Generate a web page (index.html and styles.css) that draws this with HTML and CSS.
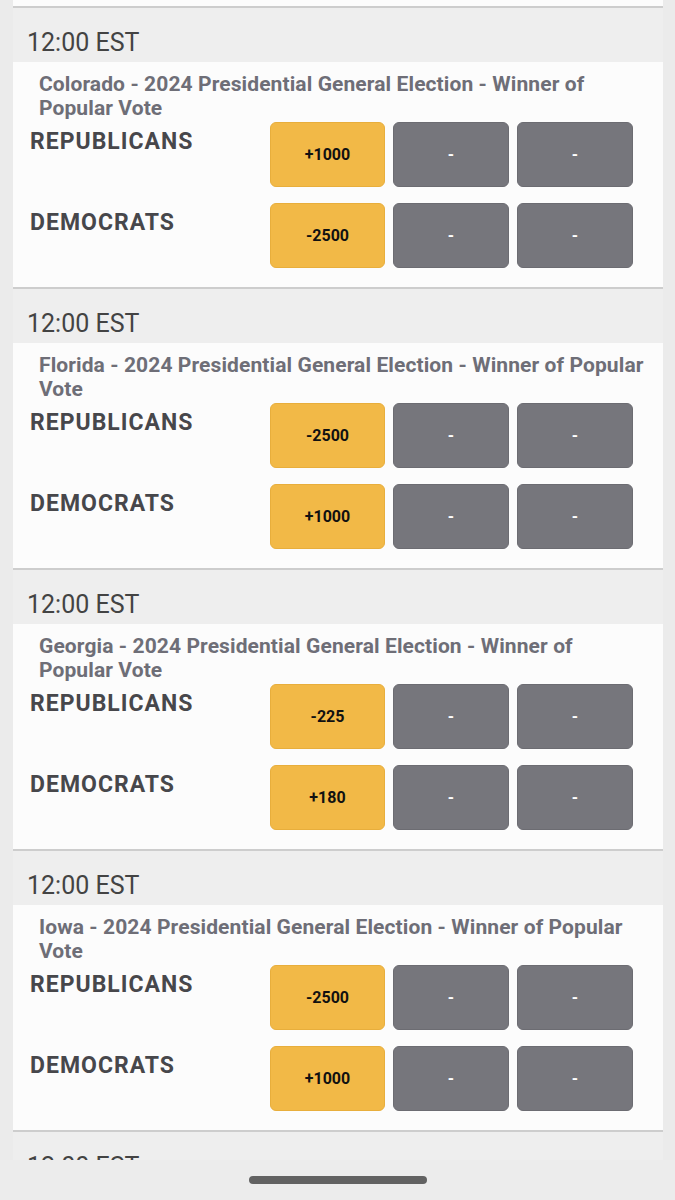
FILE: index.html
```html
<!DOCTYPE html>
<html lang="en">
<head>
    <meta charset="UTF-8">
    <meta name="viewport" content="width=device-width, initial-scale=1.0">
    <title>Election Odds</title>
    <link rel="stylesheet" href="styles.css">
</head>
<body>
<div class="screen">
    <div class="feed">
        <div class="card card-stub"></div>

        <div class="time">12:00 EST</div>
        <div class="card">
            <div class="title">Colorado - 2024 Presidential General Election - Winner of<br>Popular Vote</div>
            <div class="rows">
                <div class="team">REPUBLICANS</div>
                <button class="odd odd-main">+1000</button>
                <button class="odd">-</button>
                <button class="odd">-</button>
                <div class="team">DEMOCRATS</div>
                <button class="odd odd-main">-2500</button>
                <button class="odd">-</button>
                <button class="odd">-</button>
            </div>
        </div>

        <div class="time">12:00 EST</div>
        <div class="card">
            <div class="title">Florida - 2024 Presidential General Election - Winner of Popular<br>Vote</div>
            <div class="rows">
                <div class="team">REPUBLICANS</div>
                <button class="odd odd-main">-2500</button>
                <button class="odd">-</button>
                <button class="odd">-</button>
                <div class="team">DEMOCRATS</div>
                <button class="odd odd-main">+1000</button>
                <button class="odd">-</button>
                <button class="odd">-</button>
            </div>
        </div>

        <div class="time">12:00 EST</div>
        <div class="card">
            <div class="title">Georgia - 2024 Presidential General Election - Winner of<br>Popular Vote</div>
            <div class="rows">
                <div class="team">REPUBLICANS</div>
                <button class="odd odd-main">-225</button>
                <button class="odd">-</button>
                <button class="odd">-</button>
                <div class="team">DEMOCRATS</div>
                <button class="odd odd-main">+180</button>
                <button class="odd">-</button>
                <button class="odd">-</button>
            </div>
        </div>

        <div class="time">12:00 EST</div>
        <div class="card">
            <div class="title">Iowa - 2024 Presidential General Election - Winner of Popular<br>Vote</div>
            <div class="rows">
                <div class="team">REPUBLICANS</div>
                <button class="odd odd-main">-2500</button>
                <button class="odd">-</button>
                <button class="odd">-</button>
                <div class="team">DEMOCRATS</div>
                <button class="odd odd-main">+1000</button>
                <button class="odd">-</button>
                <button class="odd">-</button>
            </div>
        </div>

        <div class="time">12:00 EST</div>
    </div>
    <div class="navbar"><span class="pill"></span></div>
</div>
</body>
</html>
```

FILE: styles.css
```css
body { margin: 0; background: #ebebeb; font-family: Roboto, "Noto Sans", Arial, sans-serif; }
.screen { width: 675px; height: 1200px; display: flex; flex-direction: column; }
.feed { height: 1160px; overflow: hidden; margin-left: 13px; width: 650px; background: #eeeeee; }

.card { background: #fcfcfc; border-bottom: 2px solid #cdcdcd; padding: 10px 30px 19px 0; }
.card-stub { height: 6px; padding: 0; }

.time { height: 54px; box-sizing: border-box; padding: 21px 0 0 14px; font-size: 25px; line-height: 28px; color: #434343; }

.title { padding-left: 26px; font-size: 21px; line-height: 24px; font-weight: 700; letter-spacing: 0.1px; color: #6e6e77; white-space: nowrap; }

.rows { display: grid; grid-template-columns: 1fr 115px 116px 116px; column-gap: 8px; row-gap: 16px; margin-top: 2px; }
.team { padding: 6px 0 0 17px; font-size: 23px; line-height: 27px; font-weight: 700; letter-spacing: 1px; color: #47474b; }

.odd { height: 65px; border: 1px solid #6c6c72; border-radius: 6px; background: #76767c; color: #fff; font-family: Roboto, Arial, sans-serif; font-size: 16px; font-weight: 700; padding: 0; }
.odd-main { background: #f2b947; border-color: #e8ae3c; color: #111; }

.navbar { height: 40px; background: #ececec; display: flex; justify-content: center; padding-top: 16px; box-sizing: border-box; }
.pill { width: 178px; height: 8px; border-radius: 4px; background: #626262; }
```
